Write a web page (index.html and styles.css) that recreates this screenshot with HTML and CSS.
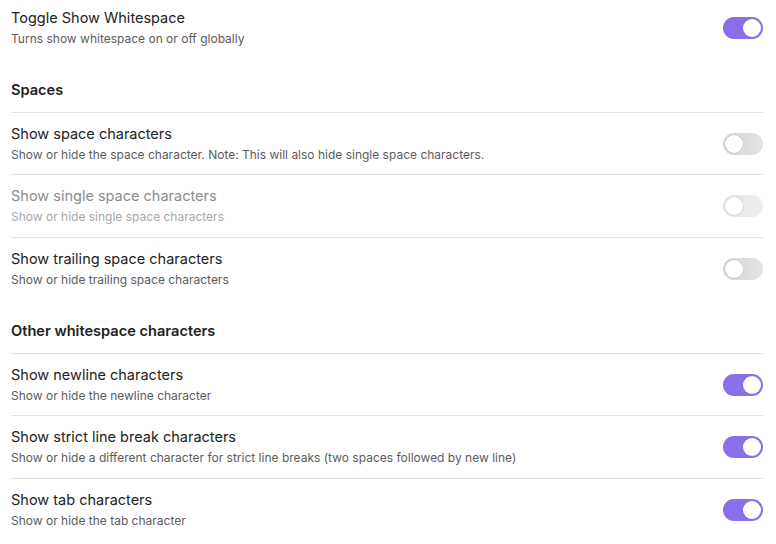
FILE: index.html
```html
<!DOCTYPE html>
<html>
<head>
<meta charset="utf-8">
<link rel="stylesheet" href="styles.css">
</head>
<body>
<div class="settings">
  <div class="item first">
    <div class="info">
      <div class="name">Toggle Show Whitespace</div>
      <div class="desc">Turns show whitespace on or off globally</div>
    </div>
    <div class="toggle on"><span class="knob"></span></div>
  </div>

  <div class="heading">Spaces</div>

  <div class="item">
    <div class="info">
      <div class="name">Show space characters</div>
      <div class="desc">Show or hide the space character. Note: This will also hide single space characters.</div>
    </div>
    <div class="toggle"><span class="knob"></span></div>
  </div>
  <div class="item bordered disabled">
    <div class="info">
      <div class="name">Show single space characters</div>
      <div class="desc">Show or hide single space characters</div>
    </div>
    <div class="toggle"><span class="knob"></span></div>
  </div>
  <div class="item bordered">
    <div class="info">
      <div class="name">Show trailing space characters</div>
      <div class="desc">Show or hide trailing space characters</div>
    </div>
    <div class="toggle"><span class="knob"></span></div>
  </div>

  <div class="heading">Other whitespace characters</div>

  <div class="item">
    <div class="info">
      <div class="name">Show newline characters</div>
      <div class="desc">Show or hide the newline character</div>
    </div>
    <div class="toggle on"><span class="knob"></span></div>
  </div>
  <div class="item bordered">
    <div class="info">
      <div class="name">Show strict line break characters</div>
      <div class="desc">Show or hide a different character for strict line breaks (two spaces followed by new line)</div>
    </div>
    <div class="toggle on"><span class="knob"></span></div>
  </div>
  <div class="item bordered">
    <div class="info">
      <div class="name">Show tab characters</div>
      <div class="desc">Show or hide the tab character</div>
    </div>
    <div class="toggle on"><span class="knob"></span></div>
  </div>
</div>
</body>
</html>
```
FILE: styles.css
```css
html, body {
  margin: 0;
  padding: 0;
  background: #ffffff;
}
body {
  font-family: Inter, "Noto Sans", "Liberation Sans", sans-serif;
  color: #222222;
  overflow: hidden;
}
.settings {
  padding: 0 13px 0 11px;
  display: flex;
  flex-direction: column;
}
.item {
  display: flex;
  align-items: center;
  justify-content: space-between;
  padding: 11px 0 10px;
  gap: 16px;
}
.item.first {
  padding: 8px 0 11px;
}
.item.bordered {
  border-top: 1px solid #e3e3e3;
  padding-bottom: 11px;
}
.info {
  display: flex;
  flex-direction: column;
  gap: 2px;
}
.name {
  font-size: 14.5px;
  line-height: 20px;
  color: #222222;
}
.desc {
  font-size: 12px;
  line-height: 18px;
  color: #5c5c5c;
}
.disabled .name {
  color: #8c8c8c;
}
.disabled .desc {
  color: #a8a8a8;
}
.heading {
  font-size: 14.6px;
  font-weight: 600;
  line-height: 20px;
  color: #222222;
  padding: 21px 0 12px;
  border-bottom: 1px solid #e3e3e3;
}
.toggle {
  flex: none;
  width: 40px;
  height: 22px;
  border-radius: 11px;
  background: linear-gradient(to right, #d4d4d4, #e4e4e4);
  position: relative;
  box-sizing: border-box;
}
.toggle .knob {
  position: absolute;
  top: 2px;
  left: 2px;
  width: 18px;
  height: 18px;
  border-radius: 50%;
  background: #ffffff;
  box-shadow: 0 0 0 0.5px rgba(0,0,0,0.12);
}
.toggle.on {
  background: #8b6fe8;
}
.toggle.on .knob {
  left: 20px;
  box-shadow: none;
}
.disabled .toggle {
  background: linear-gradient(to right, #e6e6e6, #eeeeee);
}
```
